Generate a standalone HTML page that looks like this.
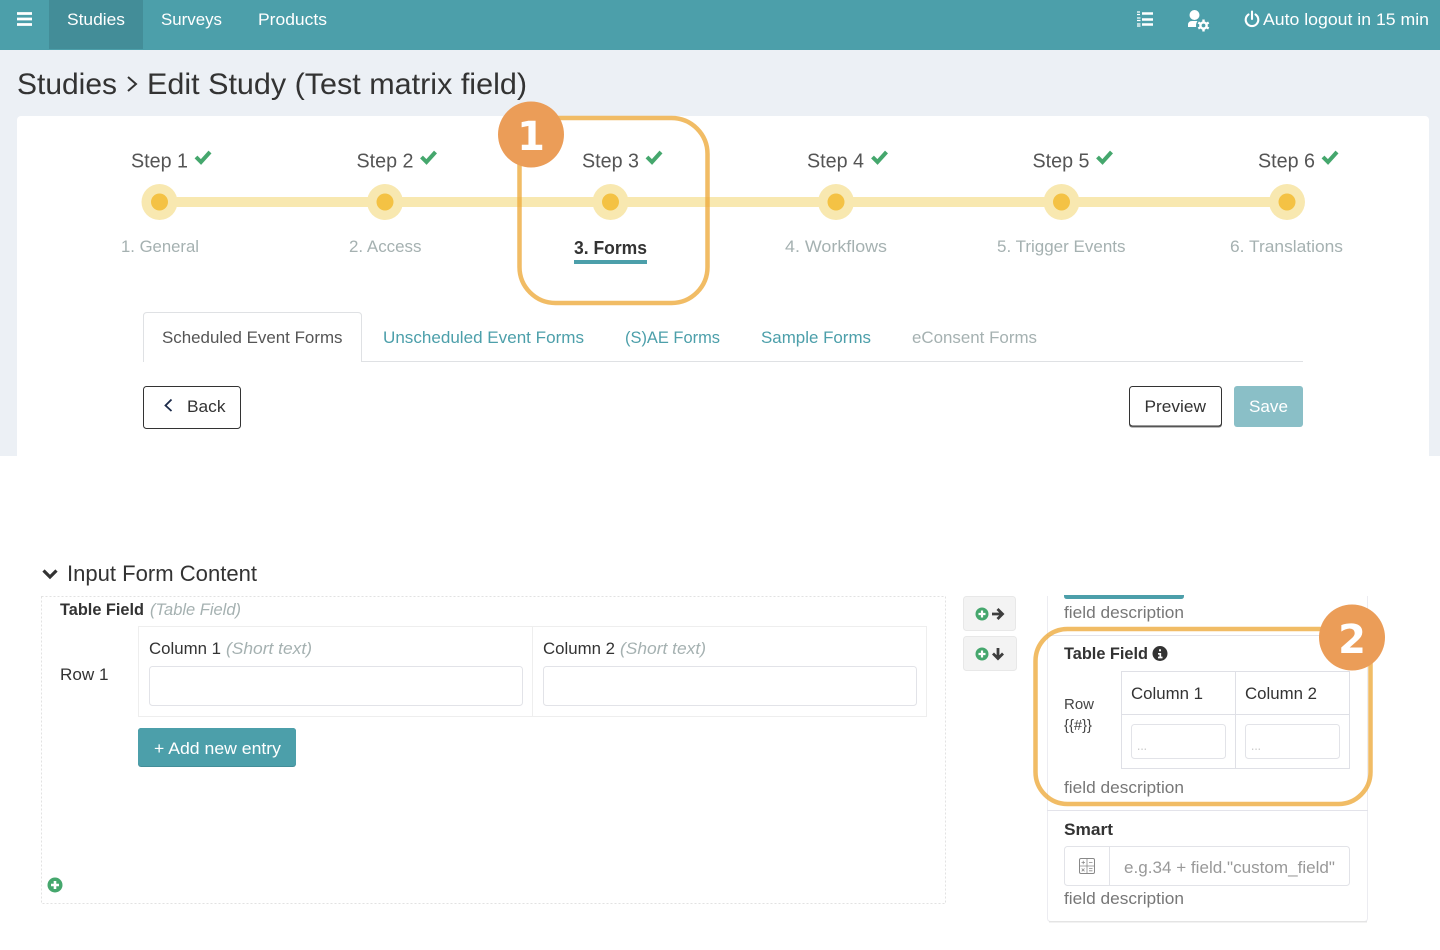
<!DOCTYPE html>
<html lang="en">
<head>
<meta charset="utf-8">
<title>Edit Study</title>
<style>
html,body{margin:0;padding:0;background:#fff;width:1440px;height:950px;overflow:hidden}
svg{display:block}
text{font-family:"Liberation Sans",sans-serif;white-space:pre}
.s{font-size:20px;fill:#555}
.l{font-size:17px;fill:#a5b1b1}
.t{font-size:17px;fill:#4c9faa}
.d{font-size:17px;fill:#333}
.h{font-size:30px;fill:#333}
.n{font-size:17px;fill:#fff}
.b{font-size:17px;font-weight:bold;fill:#333}
.i{font-size:17px;font-style:italic;fill:#a5b1b1}
.f{font-size:17px;fill:#777}
.big{font-family:"DejaVu Sans",sans-serif;font-weight:bold;font-size:40px;fill:#fff}
</style>
</head>
<body>
<svg width="1440" height="950" viewBox="0 0 1440 950" xmlns="http://www.w3.org/2000/svg">
<defs>
<path id="ck" d="M1.500 7.500L6.500 12.500L15.500 2.500" fill="none" stroke="#45a76d" stroke-width="4"/>
<g id="dot"><circle r="18" fill="#f8e8b0"/><circle r="8.500" fill="#f4c244"/></g>
<g id="plus"><circle r="6.500" fill="#45a76d"/><path d="M-3.500 0H3.500M0-3.500V3.500" stroke="#fff" stroke-width="2.200"/></g>
</defs>

<rect width="1440" height="456" fill="#ecf0f5"/>
<rect x="17" y="116" width="1412" height="345" rx="4" fill="#fff"/>
<rect y="456" width="1440" height="494" fill="#fff"/>

<!-- nav -->
<rect width="1440" height="50" fill="#4c9faa"/>
<rect x="49" width="94" height="49" fill="#438d98"/>
<path d="M17 13.500H32M17 19H32M17 24.500H32" stroke="#fff" stroke-width="2.800"/>
<text class="n" x="67" y="25" textLength="58" lengthAdjust="spacingAndGlyphs">Studies</text>
<text class="n" x="161" y="25" textLength="61" lengthAdjust="spacingAndGlyphs">Surveys</text>
<text class="n" x="258" y="25" textLength="69" lengthAdjust="spacingAndGlyphs">Products</text>
<path d="M1142 13.500H1153M1142 19.500H1153M1142 24.500H1153" stroke="#fff" stroke-width="2.400"/>
<path d="M1137 12H1140M1137 14.500H1140M1137 18H1140.500M1137 20.500H1140.500M1137 24H1140.500M1137 26H1140.500" stroke="#fff" stroke-width="1.300"/>
<!-- user with gear -->
<circle cx="1194.500" cy="15" r="5" fill="#fff"/>
<path d="M1188 27V25Q1188 21 1192 21H1197Q1200 21 1202 23V27Z" fill="#fff"/>
<circle cx="1203.500" cy="25.500" r="7.500" fill="#4c9faa"/>
<path d="M1203.500 19.500V31.500M1198.300 22.500L1208.700 28.500M1208.700 22.500L1198.300 28.500" stroke="#fff" stroke-width="2.400"/>
<circle cx="1203.500" cy="25.500" r="4.300" fill="#fff"/>
<circle cx="1203.500" cy="25.500" r="1.900" fill="#4c9faa"/>
<path d="M1248.500 14.500A6.300 6.300 0 1 0 1255.500 14.500" fill="none" stroke="#fff" stroke-width="2.100" stroke-linecap="round"/>
<path d="M1252 11.500V19" stroke="#fff" stroke-width="2.100" stroke-linecap="round"/>
<text class="n" x="1263" y="25" textLength="166" lengthAdjust="spacingAndGlyphs">Auto logout in 15 min</text>

<!-- heading -->
<text class="h" x="17" y="94" textLength="100" lengthAdjust="spacingAndGlyphs">Studies</text>
<path d="M128 77L136 84L128 91" fill="none" stroke="#333" stroke-width="2"/>
<text class="h" x="147" y="94" textLength="380" lengthAdjust="spacingAndGlyphs">Edit Study (Test matrix field)</text>

<!-- stepper -->
<rect x="160" y="197" width="1127" height="10" fill="#f8e8b0"/>
<use href="#dot" x="159.500" y="202"/>
<use href="#dot" x="385" y="202"/>
<use href="#dot" x="610.500" y="202"/>
<use href="#dot" x="836" y="202"/>
<use href="#dot" x="1061.500" y="202"/>
<use href="#dot" x="1287" y="202"/>

<text class="s" x="131" y="167.500" textLength="57" lengthAdjust="spacingAndGlyphs">Step 1</text>
<text class="s" x="356.500" y="167.500" textLength="57" lengthAdjust="spacingAndGlyphs">Step 2</text>
<text class="s" x="582" y="167.500" textLength="57" lengthAdjust="spacingAndGlyphs">Step 3</text>
<text class="s" x="807" y="167.500" textLength="57" lengthAdjust="spacingAndGlyphs">Step 4</text>
<text class="s" x="1032.500" y="167.500" textLength="57" lengthAdjust="spacingAndGlyphs">Step 5</text>
<text class="s" x="1258" y="167.500" textLength="57" lengthAdjust="spacingAndGlyphs">Step 6</text>
<use href="#ck" x="194.500" y="149.500"/>
<use href="#ck" x="420" y="149.500"/>
<use href="#ck" x="645.500" y="149.500"/>
<use href="#ck" x="871" y="149.500"/>
<use href="#ck" x="1096" y="149.500"/>
<use href="#ck" x="1321.500" y="149.500"/>

<text class="l" x="121" y="252" textLength="78" lengthAdjust="spacingAndGlyphs">1. General</text>
<text class="l" x="349" y="252" textLength="72.500" lengthAdjust="spacingAndGlyphs">2. Access</text>
<text x="574" y="254" font-size="18" font-weight="bold" fill="#333" textLength="73" lengthAdjust="spacingAndGlyphs">3. Forms</text>
<rect x="574" y="260" width="73" height="4" fill="#4c9faa"/>
<text class="l" x="785" y="252" textLength="102" lengthAdjust="spacingAndGlyphs">4. Workflows</text>
<text class="l" x="997" y="252" textLength="128.500" lengthAdjust="spacingAndGlyphs">5. Trigger Events</text>
<text class="l" x="1230" y="252" textLength="113" lengthAdjust="spacingAndGlyphs">6. Translations</text>

<!-- tabs -->
<path d="M143 361.500H1303" stroke="#dfe1e4" stroke-width="1"/>
<path d="M143.500 362V316Q143.500 312.500 147 312.500H358Q361.500 312.500 361.500 316V362" fill="#fff" stroke="#dfe1e4"/>
<rect x="144" y="360" width="217" height="3" fill="#fff"/>
<text class="d" style="fill:#555" x="162" y="343" textLength="180.500" lengthAdjust="spacingAndGlyphs">Scheduled Event Forms</text>
<text class="t" x="383" y="343" textLength="201" lengthAdjust="spacingAndGlyphs">Unscheduled Event Forms</text>
<text class="t" x="625" y="343" textLength="95" lengthAdjust="spacingAndGlyphs">(S)AE Forms</text>
<text class="t" x="761" y="343" textLength="110" lengthAdjust="spacingAndGlyphs">Sample Forms</text>
<text class="l" x="912" y="343" textLength="125" lengthAdjust="spacingAndGlyphs">eConsent Forms</text>

<!-- buttons -->
<rect x="143.500" y="386.500" width="97" height="42" rx="3" fill="#fff" stroke="#333"/>
<path d="M171.500 399.500L165.500 405.500L171.500 411" fill="none" stroke="#1c2b4a" stroke-width="1.800"/>
<text class="d" x="187" y="412" textLength="38.500" lengthAdjust="spacingAndGlyphs">Back</text>
<rect x="1129" y="387" width="93" height="40.500" rx="3" fill="#777"/>
<rect x="1129.500" y="386.500" width="92" height="39.500" rx="3" fill="#fff" stroke="#333"/>
<text class="d" x="1144.500" y="412" textLength="61.500" lengthAdjust="spacingAndGlyphs">Preview</text>
<rect x="1234" y="386" width="69" height="41" rx="3" fill="#8abfc7"/>
<text class="n" x="1249" y="412" textLength="39" lengthAdjust="spacingAndGlyphs">Save</text>

<!-- annotation 1 -->
<rect x="519.500" y="118" width="188" height="185" rx="36" fill="none" stroke="#eda93a" stroke-opacity=".78" stroke-width="4.500"/>
<circle cx="531" cy="134.500" r="33" fill="#eb9d58"/>
<text class="big" x="531" y="150" text-anchor="middle">1</text>

<!-- left panel -->
<path d="M43.500 570.500L50 577L56.500 570.500" fill="none" stroke="#333" stroke-width="3.200"/>
<text x="67" y="581" font-size="22" fill="#333" textLength="190" lengthAdjust="spacingAndGlyphs">Input Form Content</text>
<rect x="41.500" y="596.500" width="904" height="307" fill="none" stroke="#e2e2e2" stroke-dasharray="2 2"/>
<text class="b" x="60" y="615" textLength="84" lengthAdjust="spacingAndGlyphs">Table Field</text>
<text class="i" x="150" y="615" textLength="91" lengthAdjust="spacingAndGlyphs">(Table Field)</text>
<rect x="138.500" y="626.500" width="788" height="90" fill="#fff" stroke="#eeeeee"/>
<path d="M532.500 627V716" stroke="#eeeeee"/>
<text class="d" x="60" y="680" textLength="48.500" lengthAdjust="spacingAndGlyphs">Row 1</text>
<text class="d" x="149" y="654" textLength="72" lengthAdjust="spacingAndGlyphs">Column 1</text>
<text class="i" x="226" y="654" textLength="86" lengthAdjust="spacingAndGlyphs">(Short text)</text>
<text class="d" x="543" y="654" textLength="72" lengthAdjust="spacingAndGlyphs">Column 2</text>
<text class="i" x="620" y="654" textLength="86" lengthAdjust="spacingAndGlyphs">(Short text)</text>
<rect x="149.500" y="666.500" width="373" height="39" rx="3" fill="#fff" stroke="#e2e3e8"/>
<rect x="543.500" y="666.500" width="373" height="39" rx="3" fill="#fff" stroke="#e2e3e8"/>
<rect x="138" y="728" width="158" height="39" rx="3" fill="#438d98"/>
<rect x="138" y="728" width="158" height="38" rx="3" fill="#4c9faa"/>
<text class="n" x="154" y="754" textLength="127" lengthAdjust="spacingAndGlyphs">+ Add new entry</text>
<circle cx="55" cy="885" r="7.500" fill="#45a76d"/>
<path d="M51 885H59M55 881V889" stroke="#fff" stroke-width="2.600"/>

<!-- middle buttons -->
<rect x="963.500" y="596.500" width="52" height="34" rx="3" fill="#f3f3f3" stroke="#e8e8e8"/>
<rect x="963.500" y="636.500" width="53" height="34" rx="3" fill="#f3f3f3" stroke="#e8e8e8"/>
<use href="#plus" x="982" y="614"/>
<use href="#plus" x="982" y="654"/>
<path d="M992 614H1002M997.500 609L1002.500 614L997.500 619" fill="none" stroke="#3d3d3d" stroke-width="2.800"/>
<path d="M998 648V658M993 653.500L998 658.500L1003 653.500" fill="none" stroke="#3d3d3d" stroke-width="2.800"/>

<!-- right panel -->
<rect x="1047.500" y="590" width="320" height="331.500" rx="3" fill="#fff" stroke="#ececf1"/>
<rect x="1049" y="921" width="318" height="1.500" fill="#e4e4e4"/>
<rect x="1000" y="560" width="400" height="36" fill="#fff"/>
<path d="M1064 595H1184V596Q1184 599 1181 599H1067Q1064 599 1064 596Z" fill="#4c9faa"/>
<text class="f" x="1064" y="618" textLength="120" lengthAdjust="spacingAndGlyphs">field description</text>
<path d="M1047 635.500H1368M1047 810.500H1368" stroke="#e3e3ea"/>
<text class="b" x="1064" y="659" textLength="84" lengthAdjust="spacingAndGlyphs">Table Field</text>
<circle cx="1160" cy="653.500" r="7.500" fill="#333"/>
<path d="M1160 649.300V651.300" stroke="#fff" stroke-width="2"/>
<path d="M1158 653.800H1160.300V657.500M1158 657.500H1162.500" fill="none" stroke="#fff" stroke-width="1.700"/>
<rect x="1121.500" y="671.500" width="228" height="97" fill="#fff" stroke="#dfe0e6"/>
<path d="M1235.500 672V768M1122 714.500H1349" stroke="#dfe0e6"/>
<text class="d" x="1131" y="699" textLength="72" lengthAdjust="spacingAndGlyphs">Column 1</text>
<text class="d" x="1245" y="699" textLength="72" lengthAdjust="spacingAndGlyphs">Column 2</text>
<text x="1064" y="709" font-size="15" fill="#444" textLength="30" lengthAdjust="spacingAndGlyphs">Row</text>
<text x="1064" y="730" font-size="15" fill="#444" textLength="28" lengthAdjust="spacingAndGlyphs">{{#}}</text>
<rect x="1131.500" y="724.500" width="94" height="34" rx="3" fill="#fff" stroke="#e2e3e8"/>
<rect x="1245.500" y="724.500" width="94" height="34" rx="3" fill="#fff" stroke="#e2e3e8"/>
<text x="1137" y="750" font-size="14" fill="#c8c8c8" textLength="10" lengthAdjust="spacingAndGlyphs">...</text>
<text x="1251" y="750" font-size="14" fill="#c8c8c8" textLength="10" lengthAdjust="spacingAndGlyphs">...</text>
<text class="f" x="1064" y="793" textLength="120" lengthAdjust="spacingAndGlyphs">field description</text>

<text class="b" x="1064" y="835" textLength="49" lengthAdjust="spacingAndGlyphs">Smart</text>
<rect x="1064.500" y="846.500" width="285" height="39" rx="3" fill="#fff" stroke="#e2e3e8"/>
<path d="M1109.500 847V885" stroke="#e2e3e8"/>
<rect x="1079.500" y="858.500" width="15" height="15" rx="1.500" fill="none" stroke="#888"/>
<path d="M1087 859V873M1080 866H1094M1081.500 862.500H1085M1083.250 860.700V864.300M1089 862.500H1092.500M1081.700 868.500L1084.500 871.300M1084.500 868.500L1081.700 871.300M1089 868.500H1092.500M1089 870.800H1092.500" stroke="#888" stroke-width=".8" fill="none"/>
<text x="1124" y="873" font-size="17" fill="#999" textLength="211" lengthAdjust="spacingAndGlyphs">e.g.34 + field."custom_field"</text>
<text class="f" x="1064" y="904" textLength="120" lengthAdjust="spacingAndGlyphs">field description</text>

<!-- annotation 2 -->
<rect x="1035.500" y="629" width="335" height="175" rx="32" fill="none" stroke="#eda93a" stroke-opacity=".78" stroke-width="4.500"/>
<circle cx="1352" cy="637.500" r="33" fill="#eb9d58"/>
<text class="big" x="1352" y="653" text-anchor="middle">2</text>
</svg>
</body>
</html>
